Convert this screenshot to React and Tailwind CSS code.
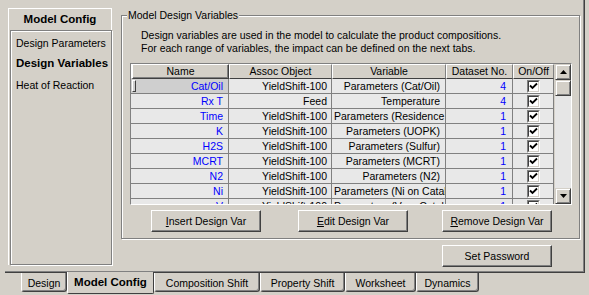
import React from "react";

const rows = [
  ["Cat/Oil", "YieldShift-100", "Parameters (Cat/Oil)", "4"],
  ["Rx T", "Feed", "Temperature", "4"],
  ["Time", "YieldShift-100", "Parameters (Residence Time)", "1"],
  ["K", "YieldShift-100", "Parameters (UOPK)", "1"],
  ["H2S", "YieldShift-100", "Parameters (Sulfur)", "1"],
  ["MCRT", "YieldShift-100", "Parameters (MCRT)", "1"],
  ["N2", "YieldShift-100", "Parameters (N2)", "1"],
  ["Ni", "YieldShift-100", "Parameters (Ni on Catalyst)", "1"],
  ["V", "YieldShift-100", "Parameters (V on Catalyst)", "1"],
];

function Check() {
  return (
    <div className="w-[13px] h-[13px] border border-t-[#808080] border-l-[#808080] border-r-white border-b-white">
      <div className="w-[11px] h-[11px] bg-white border border-t-[#404040] border-l-[#404040] border-r-[#d4d0c8] border-b-[#d4d0c8] flex items-center justify-center">
        <svg width="9" height="9" viewBox="0 0 9 9">
          <path d="M1 3.5 L3.5 6 L8 1.5" stroke="#000" strokeWidth="1.8" fill="none" />
        </svg>
      </div>
    </div>
  );
}

function Btn({ children, className = "" }) {
  return (
    <div
      className={
        "w-[110px] h-[22px] flex items-center justify-center border border-t-white border-l-white border-r-[#404040] border-b-[#404040] shadow-[inset_-1px_-1px_0_#808080] " +
        className
      }
    >
      {children}
    </div>
  );
}

function ScrollBtn({ up }) {
  return (
    <div className="w-[16px] h-[16px] border border-t-[#d4d0c8] border-l-[#d4d0c8] border-r-[#404040] border-b-[#404040] shadow-[inset_1px_1px_0_#fff,inset_-1px_-1px_0_#808080] bg-[#d4d0c8] flex items-center justify-center">
      <svg width="7" height="4" viewBox="0 0 7 4">
        {up ? <path d="M3.5 0 L7 4 L0 4 Z" fill="#000" /> : <path d="M0 0 L7 0 L3.5 4 Z" fill="#000" />}
      </svg>
    </div>
  );
}

function Tab({ children, w, selected }) {
  if (selected) {
    return (
      <div
        className={
          "relative z-10 -mt-[1px] h-[22px] bg-[#d4d0c8] border-l border-l-white border-r border-r-[#404040] border-b border-b-[#404040] rounded-b-[2px] flex items-center justify-center font-bold text-[11.5px] " +
          w
        }
      >
        {children}
      </div>
    );
  }
  return (
    <div
      className={
        "h-[19px] border-l border-l-white border-r border-r-[#404040] border-b border-b-[#404040] shadow-[inset_-1px_-1px_0_#808080] rounded-b-[3px] flex items-center justify-center pt-[2px] " +
        w
      }
    >
      {children}
    </div>
  );
}

export default function App() {
  return (
    <div className="w-[589px] h-[295px] overflow-hidden bg-[#d4d0c8] text-black text-[10.5px] leading-none font-['Liberation_Sans',Arial,sans-serif] flex flex-col">
      {/* tab page frame */}
      <div className="ml-[5px] w-[580px] h-[273px] shrink-0 border-r border-b border-[#404040] shadow-[inset_-1px_-1px_0_#808080] flex">
        {/* left panel */}
        <div className="mt-[8px] ml-[3px] w-[104px] h-[257px] flex flex-col border-l border-t border-white">
          <div className="h-[21px] flex items-center justify-center font-bold text-[11.5px] border-r border-white">
            Model Config
          </div>
          <div className="flex-1 ml-[1px] border border-[#808080] shadow-[inset_1px_1px_0_#fff,1px_1px_0_#fff] pl-[5px] flex flex-col">
            <div className="mt-[2px] h-[20px] flex items-center">Design Parameters</div>
            <div className="mt-[1px] h-[20px] flex items-center font-bold text-[11.5px]">Design Variables</div>
            <div className="mt-[1px] h-[20px] flex items-center">Heat of Reaction</div>
          </div>
        </div>

        {/* right column */}
        <div className="ml-[9px] mt-[15px] flex flex-col">
          <div className="relative w-[459px] h-[224px] border border-[#808080] shadow-[inset_1px_1px_0_#fff,1px_1px_0_#fff] flex flex-col">
            <span className="absolute -top-[7px] left-[5px] bg-[#d4d0c8] px-[1px] leading-[12px]">
              Model Design Variables
            </span>
            <div className="mt-[13px] ml-[19px] leading-[13px]">
              <div>Design variables are used in the model to calculate the product compositions.</div>
              <div>For each range of variables, the impact can be defined on the next tabs.</div>
            </div>

            {/* grid */}
            <div className="ml-[8px] mt-[8px] w-[442px] h-[142px] border border-t-[#808080] border-l-[#808080] border-r-white border-b-white flex bg-[#d4d0c8]">
              <div className="w-[423px] overflow-hidden flex flex-col">
                <div className="h-[15px] shrink-0 flex">
                  <div className="w-[98px] border-t border-l-2 border-white border-r border-b border-r-[#404040] border-b-[#404040] shadow-[inset_-1px_-1px_0_#808080] flex items-center justify-center">Name</div>
                  <div className="w-[103px] border-t border-l border-white border-r border-b border-r-[#808080] border-b-[#404040] flex items-center justify-center">Assoc Object</div>
                  <div className="w-[114px] border-t border-l border-white border-r border-b border-r-[#808080] border-b-[#404040] flex items-center justify-center">Variable</div>
                  <div className="w-[67px] border-t border-l border-white border-r border-b border-r-[#808080] border-b-[#404040] flex items-center justify-center">Dataset No.</div>
                  <div className="w-[41px] border-t border-l border-white border-r border-b border-r-[#808080] border-b-[#404040] flex items-center justify-center">On/Off</div>
                </div>
                {rows.map((r, i) => (
                  <div key={i} className="h-[15px] shrink-0 flex border-b border-[#808080] bg-[#e8e8e8]">
                    <div
                      className={
                        "w-[98px] border-r border-[#808080] flex items-center justify-end pr-[5px] text-[#0000ff] relative " +
                        (i === 0 ? "bg-[#cfcfcf]" : "")
                      }
                    >
                      {i === 0 && (
                        <div className="absolute left-[1px] top-[1px] w-[4px] h-[12px] border border-t-white border-l-white border-r-[#404040] border-b-[#404040]" />
                      )}
                      {r[0]}
                    </div>
                    <div className="w-[103px] border-r border-[#808080] flex items-center justify-end pr-[4px]">{r[1]}</div>
                    <div className="w-[114px] border-r border-[#808080] pl-[2px] pr-[5px] overflow-hidden whitespace-nowrap text-right leading-[14px]">{r[2]}</div>
                    <div className="w-[67px] border-r border-[#808080] flex items-center justify-end pr-[6px] text-[#0000ff]">{r[3]}</div>
                    <div className="w-[41px] border-r border-[#808080] flex items-center justify-center">
                      <Check />
                    </div>
                  </div>
                ))}
              </div>
              {/* scrollbar */}
              <div className="ml-[1px] w-[16px] flex flex-col bg-[#e6e6e6]">
                <ScrollBtn up />
                <div className="w-[16px] h-[16px] border border-t-[#d4d0c8] border-l-[#d4d0c8] border-r-[#404040] border-b-[#404040] shadow-[inset_1px_1px_0_#fff,inset_-1px_-1px_0_#808080] bg-[#d4d0c8]" />
                <div className="flex-1" />
                <ScrollBtn />
              </div>
            </div>

            {/* buttons */}
            <div className="mt-[5px] flex">
              <Btn className="ml-[29px]">
                <span><u>I</u>nsert Design Var</span>
              </Btn>
              <Btn className="ml-[37px]">
                <span><u>E</u>dit Design Var</span>
              </Btn>
              <Btn className="ml-[34px]">
                <span><u>R</u>emove Design Var</span>
              </Btn>
            </div>
          </div>
          <Btn className="mt-[6px] ml-[321px]">Set Password</Btn>
        </div>
      </div>

      {/* tabs */}
      <div className="flex ml-[21px]">
        <Tab w="w-[46px]">Design</Tab>
        <Tab w="w-[87px]" selected>Model Config</Tab>
        <Tab w="w-[106px]">Composition Shift</Tab>
        <Tab w="w-[85px]">Property Shift</Tab>
        <Tab w="w-[71px]">Worksheet</Tab>
        <Tab w="w-[63px]">Dynamics</Tab>
      </div>
    </div>
  );
}
